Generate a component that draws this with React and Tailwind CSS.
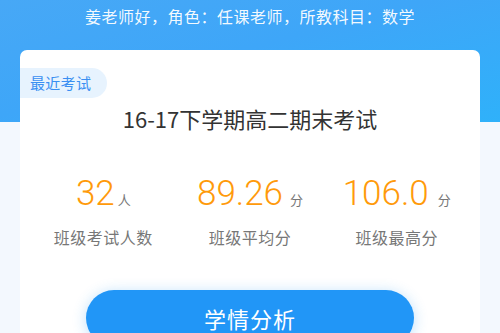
import React from 'react';

const stats = [
  { value: '32', unit: '人', label: '班级考试人数', gap: 'ml-[3px]' },
  { value: '89.26', unit: '分', label: '班级平均分', gap: 'ml-[7px]' },
  { value: '106.0', unit: '分', label: '班级最高分', gap: 'ml-[9px]' },
];

const cjk = "font-['Noto_Sans_CJK_SC',sans-serif]";

export default function App() {
  return (
    <div
      className={`w-[500px] h-[333px] overflow-hidden flex flex-col bg-[#f3f8fe] bg-[linear-gradient(165deg,#47a8f6_0%,#3ea6f8_45%,#2fb1fa_100%)] bg-no-repeat bg-[length:100%_122px] ${cjk}`}
    >
      {/* greeting */}
      <div className="h-[50px] shrink-0 pt-[4px] text-center text-white/95 text-[16px] leading-[24px] tracking-[0.5px]">
        姜老师好，角色：任课老师，所教科目：数学
      </div>

      {/* recent exam card */}
      <div className="mx-5 shrink-0 bg-white rounded-t-[7px] flex flex-col">
        <div className="mt-[18px] self-start h-[30px] pl-[10px] pr-[16px] flex items-center rounded-r-full bg-[#e7f3fe] text-[#3a8ff2] text-[15px] tracking-[0.3px]">
          最近考试
        </div>

        <div className="mt-[5px] text-center text-[#333] text-[22px] leading-[30px]">
          16-17下学期高二期末考试
        </div>

        <div className="mt-[41px] grid grid-cols-3 px-[10px]">
          {stats.map((s) => (
            <div key={s.label} className="flex flex-col items-center">
              <div className="flex items-baseline h-[40px]">
                <span className="font-['Roboto',sans-serif] font-light text-[#ff9a0a] text-[35px] leading-[40px]">
                  {s.value}
                </span>
                <span className={`${s.gap} text-[#777] text-[13px]`}>{s.unit}</span>
              </div>
              <div className="mt-[11px] text-[#777] text-[16px] leading-[24px] tracking-[0.5px]">
                {s.label}
              </div>
            </div>
          ))}
        </div>

        <button className="mt-[41px] mx-auto w-[328px] h-[56px] shrink-0 rounded-full bg-[#2196f7] text-white text-[22px] tracking-[1px] shadow-[0_2px_14px_rgba(33,150,243,0.3)]">
          学情分析
        </button>
      </div>
    </div>
  );
}
